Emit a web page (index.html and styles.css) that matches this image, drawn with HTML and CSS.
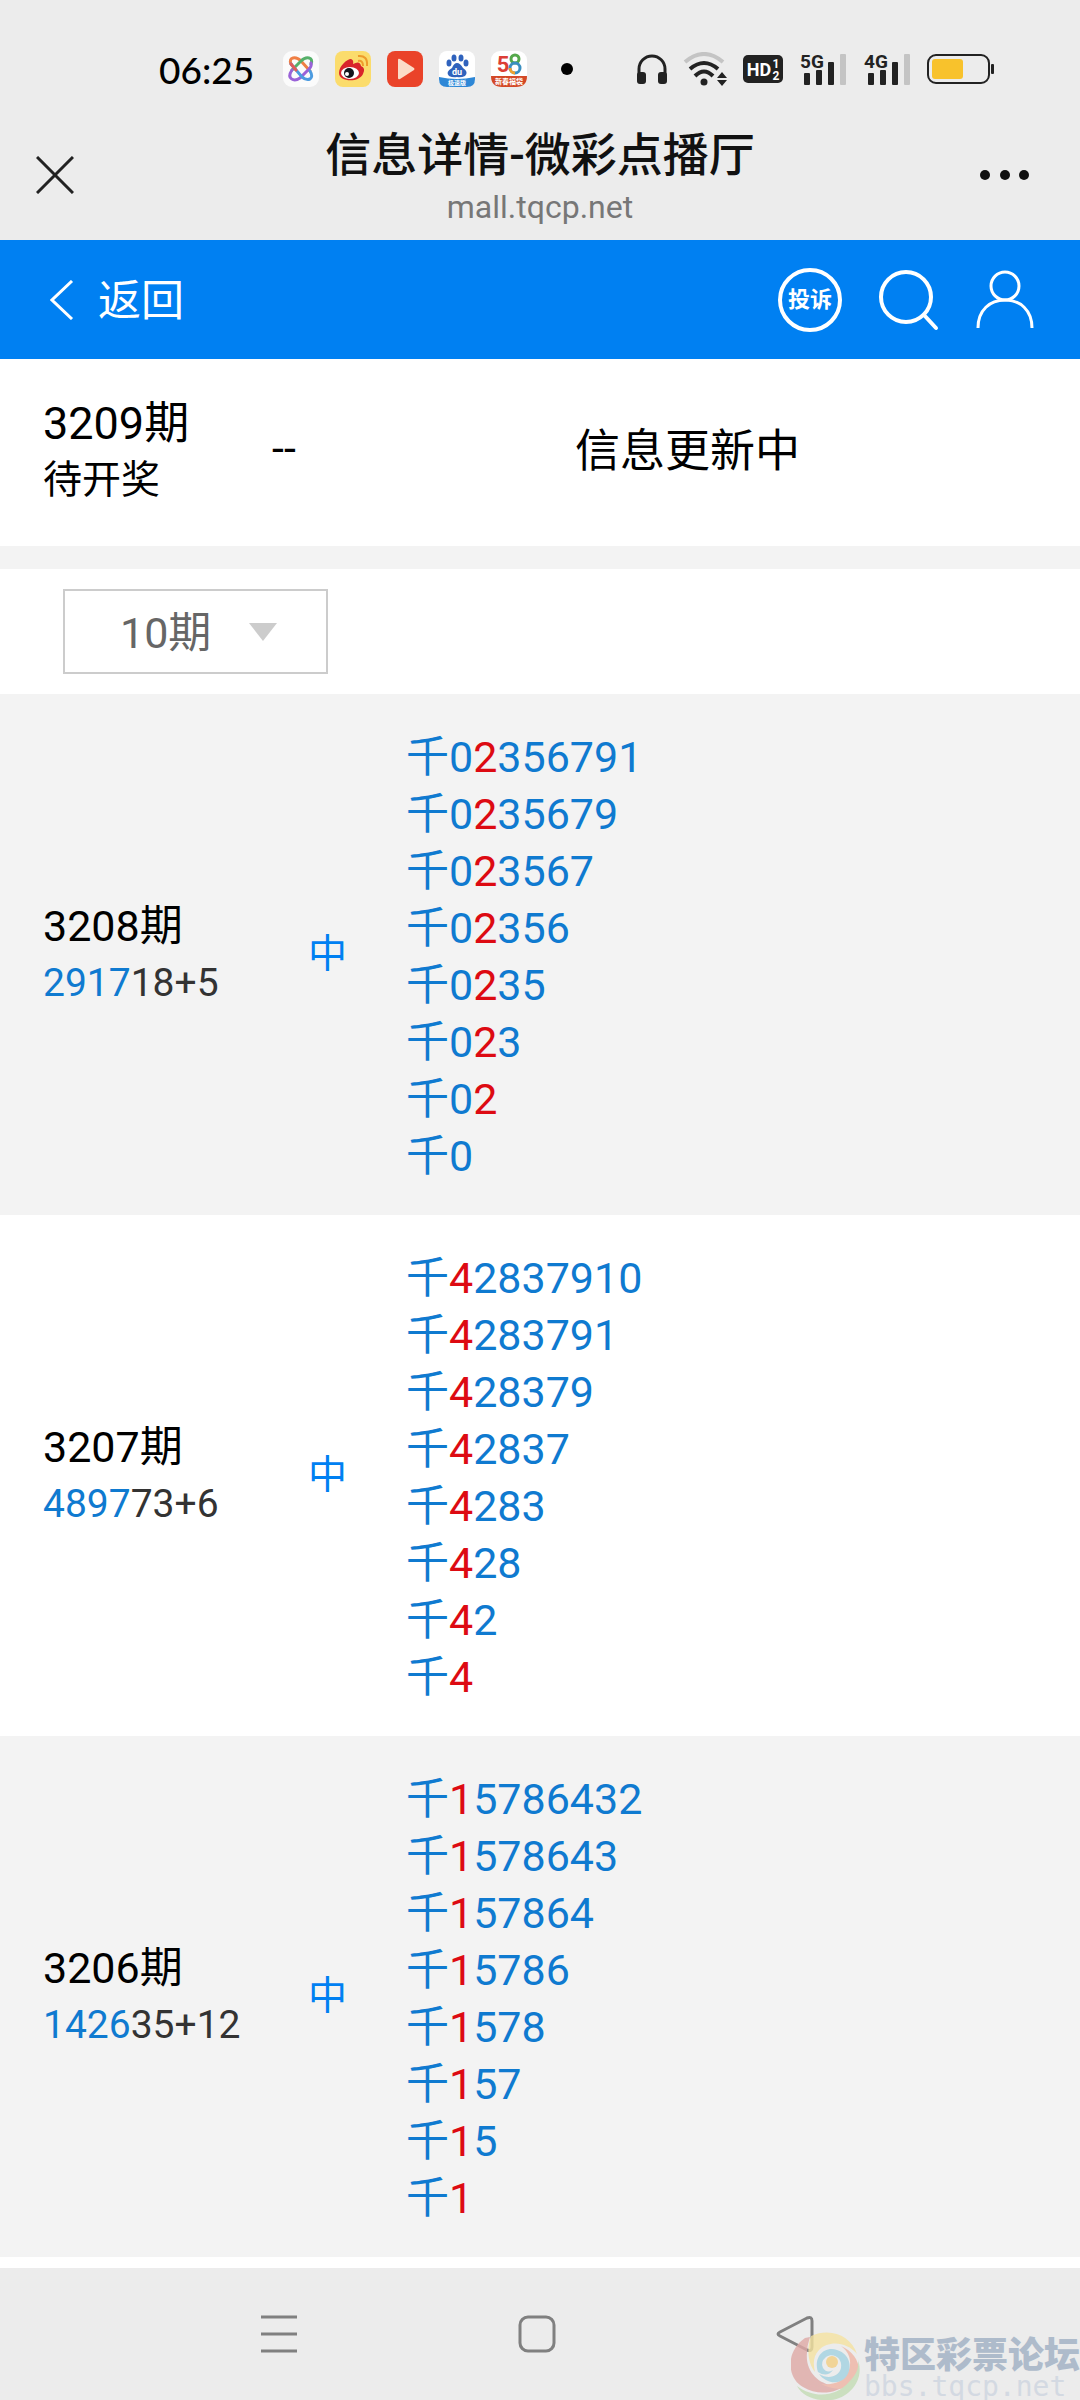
FILE: index.html
```
<!DOCTYPE html>
<html lang="zh-CN">
<head>
  <meta charset="UTF-8">
  <meta name="viewport" content="width=device-width, initial-scale=1.0">
  <title>信息详情-微彩点播厅</title>
  <link rel="stylesheet" href="styles.css">
</head>
<body>

<!-- Status bar -->
<div class="status-bar">
  <span class="clock">06:25</span>
  <div class="app-icons">
    <svg width="36" height="36" viewBox="0 0 36 36">
      <rect width="36" height="36" rx="9" fill="#fbfbfb"/>
      <g fill="none" stroke-width="3" stroke-linecap="round">
        <path d="M8 13 C5 6 13 5 18 10 L27 20" stroke="#ef7f45"/>
        <path d="M28 13 C31 6 23 5 18 10 L9 19" stroke="#56b06a"/>
        <path d="M9 19 C3 28 11 31 17 27 L26 18 Q29 15 28 12" stroke="#9a62d8"/>
        <path d="M8 13 L19 26 C25 31 32 28 27 20" stroke="#4c9be0"/>
        <path d="M8 13 L13 19" stroke="#e25a5a"/>
      </g>
    </svg>
    <svg width="36" height="36" viewBox="0 0 36 36">
      <rect width="36" height="36" rx="8" fill="#fbdc6c"/>
      <path d="M4 22 C4 15 12 8 16 8 Q19 9 18 13 Q25 9 26 15 Q31 17 28 23 C24 32 4 31 4 22Z" fill="#d9242b"/>
      <ellipse cx="15" cy="22" rx="9" ry="6" fill="#fff"/>
      <circle cx="14" cy="22" r="5" fill="#14161c"/>
      <circle cx="12" cy="23" r="2" fill="#fff"/>
      <path d="M23 10 Q28 9 28 15 M23 5 Q33 4 32 15" fill="none" stroke="#ee9b2b" stroke-width="2"/>
    </svg>
    <svg width="36" height="36" viewBox="0 0 36 36">
      <rect width="36" height="36" rx="8" fill="#ea4329"/>
      <path d="M11 9 V27 Q11 29 13 28 L27 19 Q28 18 27 17 L13 8 Q11 7 11 9Z" fill="#fbdcc8"/>
    </svg>
    <svg width="36" height="36" viewBox="0 0 36 36">
      <rect width="36" height="36" rx="8" fill="#fff"/>
      <path d="M0 26 Q18 30 36 26 V28 Q36 36 28 36 H8 Q0 36 0 28Z" fill="#2e87d6"/>
      <g fill="#2f62bd">
        <ellipse cx="10" cy="12" rx="2.5" ry="3.5"/>
        <ellipse cx="15" cy="7" rx="2.5" ry="3.5"/>
        <ellipse cx="22" cy="7" rx="2.5" ry="3.5"/>
        <ellipse cx="27" cy="12" rx="2.5" ry="3.5"/>
        <path d="M18 12 Q21 12 24 17 Q30 21 26 25 Q22 27 18 26 Q14 27 10 25 Q6 21 13 17 Q15 12 18 12Z"/>
      </g>
      <text x="18" y="24" class="icon-text" font-size="9" fill="#fff">du</text>
      <text x="18" y="34" class="icon-text" font-size="6" fill="#fff">极速版</text>
    </svg>
    <svg width="36" height="36" viewBox="0 0 36 36">
      <rect width="36" height="36" rx="9" fill="#fff"/>
      <path d="M0 25 H36 Q36 36 25 36 H11 Q0 36 0 25Z" fill="#d34826"/>
      <text x="12" y="21" class="icon-text" font-size="22" fill="#dc3e35">5</text>
      <circle cx="24" cy="8" r="4" fill="none" stroke="#54a84b" stroke-width="3"/>
      <circle cx="24" cy="17" r="5" fill="none" stroke="#3a8fc0" stroke-width="3"/>
      <path d="M19 17 A5 5 0 0 0 24 22" fill="none" stroke="#efa12e" stroke-width="3"/>
      <text x="18" y="33" class="icon-text" font-size="7" fill="#fff">新春福袋</text>
    </svg>
  </div>
  <span class="dot"></span>
  <div class="system-icons">
    <svg width="30" height="30" viewBox="0 0 30 30">
      <path d="M2 27 V15 A13 13 0 0 1 28 15 V27" fill="none" stroke="#222" stroke-width="3"/>
      <rect x="0" y="18" width="9" height="12" rx="3" fill="#222"/>
      <rect x="21" y="18" width="9" height="12" rx="3" fill="#222"/>
    </svg>
    <svg width="44" height="34" viewBox="0 0 44 34">
      <g fill="none" stroke-width="4">
        <path d="M2 10 Q21 -6 40 10" stroke="#c4c4c4"/>
        <path d="M7 17 Q21 5 35 17" stroke="#222"/>
        <path d="M12 24 Q21 15 30 24" stroke="#222"/>
      </g>
      <circle cx="21" cy="30" r="3.5" fill="#222"/>
      <path d="M34 26 L39 20 L44 26Z M34 28 L39 34 L44 28Z" fill="#222"/>
    </svg>
    <svg width="40" height="28" viewBox="0 0 40 28">
      <rect width="40" height="28" rx="5" fill="#222"/>
      <text x="16" y="21" class="icon-text" font-size="18" fill="#fff">HD</text>
      <text x="33" y="13" class="icon-text" font-size="12" fill="#fff">1</text>
      <text x="33" y="25" class="icon-text" font-size="12" fill="#fff">2</text>
    </svg>
    <svg width="48" height="36" viewBox="0 0 48 36">
      <text x="13" y="17" class="icon-text" font-size="19" fill="#222">5G</text>
      <g fill="#222">
        <rect x="5" y="22" width="6" height="12" rx="1"/>
        <rect x="17" y="19" width="6" height="15" rx="1"/>
        <rect x="29" y="11" width="6" height="23" rx="1"/>
      </g>
      <rect x="41" y="3" width="6" height="31" rx="1" fill="#c4c4c4"/>
    </svg>
    <svg width="48" height="36" viewBox="0 0 48 36">
      <text x="13" y="17" class="icon-text" font-size="19" fill="#222">4G</text>
      <g fill="#222">
        <rect x="5" y="22" width="6" height="12" rx="1"/>
        <rect x="17" y="19" width="6" height="15" rx="1"/>
        <rect x="29" y="11" width="6" height="23" rx="1"/>
      </g>
      <rect x="41" y="3" width="6" height="31" rx="1" fill="#c4c4c4"/>
    </svg>
    <svg width="68" height="30" viewBox="0 0 68 30">
      <rect x="1" y="1" width="61" height="28" rx="8" fill="none" stroke="#222" stroke-width="2"/>
      <rect x="5" y="5" width="31" height="20" rx="3" fill="#f8c22c"/>
      <rect x="64" y="10" width="3" height="10" rx="1" fill="#222"/>
    </svg>
  </div>
</div>

<!-- Browser title -->
<header class="title-bar">
  <button type="button" class="icon-button" aria-label="关闭">
    <svg width="38" height="38" viewBox="0 0 38 38"><path d="M1 1 L37 37 M37 1 L1 37" stroke="#222" stroke-width="3"/></svg>
  </button>
  <div class="title">
    <h1>信息详情-微彩点播厅</h1>
    <p>mall.tqcp.net</p>
  </div>
  <button type="button" class="icon-button more" aria-label="更多">
    <svg width="50" height="12" viewBox="0 0 50 12" fill="#111"><circle cx="5" cy="6" r="5"/><circle cx="25" cy="6" r="5"/><circle cx="44" cy="6" r="5"/></svg>
  </button>
</header>

<!-- Site navigation -->
<nav class="site-nav">
  <a href="#" class="back">
    <svg width="24" height="40" viewBox="0 0 24 40"><path d="M22 1 L2 20 L22 39" fill="none" stroke="#fff" stroke-width="3"/></svg>
    <span>返回</span>
  </a>
  <div class="nav-links">
    <a href="#" class="complaint">投诉</a>
    <a href="#" aria-label="搜索">
      <svg width="62" height="64" viewBox="0 0 62 64" fill="none" stroke="#fff" stroke-width="4" stroke-linecap="round">
        <circle cx="28" cy="29" r="25"/><path d="M46 47 L58 60"/>
      </svg>
    </a>
    <a href="#" aria-label="我的">
      <svg width="58" height="60" viewBox="0 0 58 60" fill="none" stroke="#fff" stroke-width="3">
        <circle cx="29" cy="16" r="14"/><path d="M2 58 C2 40 14 30 29 30 S56 40 56 58"/>
      </svg>
    </a>
  </div>
</nav>

<main>
  <section class="current">
    <div class="current-issue">
      <h2>3209期</h2>
      <p>待开奖</p>
    </div>
    <span class="current-result">--</span>
    <span class="current-info">信息更新中</span>
  </section>

  <div class="filter">
    <div class="select-box">
      <select id="issueCount" aria-label="期数">
        <option>10期</option>
      </select>
    </div>
  </div>

  <table class="history">
    <tbody>
      <tr>
        <td class="issue">3208期<p><b>2917</b>18+5</p></td>
        <td class="result">中</td>
        <td class="numbers">
          千0<em>2</em>356791<br>
          千0<em>2</em>35679<br>
          千0<em>2</em>3567<br>
          千0<em>2</em>356<br>
          千0<em>2</em>35<br>
          千0<em>2</em>3<br>
          千0<em>2</em><br>
          千0
        </td>
      </tr>
      <tr>
        <td class="issue">3207期<p><b>4897</b>73+6</p></td>
        <td class="result">中</td>
        <td class="numbers">
          千<em>4</em>2837910<br>
          千<em>4</em>283791<br>
          千<em>4</em>28379<br>
          千<em>4</em>2837<br>
          千<em>4</em>283<br>
          千<em>4</em>28<br>
          千<em>4</em>2<br>
          千<em>4</em>
        </td>
      </tr>
      <tr>
        <td class="issue">3206期<p><b>1426</b>35+12</p></td>
        <td class="result">中</td>
        <td class="numbers">
          千<em>1</em>5786432<br>
          千<em>1</em>578643<br>
          千<em>1</em>57864<br>
          千<em>1</em>5786<br>
          千<em>1</em>578<br>
          千<em>1</em>57<br>
          千<em>1</em>5<br>
          千<em>1</em>
        </td>
      </tr>
    </tbody>
  </table>
</main>

<!-- Phone navigation keys -->
<footer class="phone-nav">
  <button type="button" class="icon-button" aria-label="任务">
    <svg width="38" height="38" viewBox="0 0 38 38" stroke="#808080" stroke-width="3"><path d="M1 2 H37 M1 19 H37 M1 36 H37"/></svg>
  </button>
  <button type="button" class="icon-button" aria-label="主页">
    <svg width="38" height="38" viewBox="0 0 38 38"><rect x="2" y="2" width="34" height="34" rx="8" fill="none" stroke="#808080" stroke-width="3"/></svg>
  </button>
  <button type="button" class="icon-button" aria-label="后退">
    <svg width="38" height="38" viewBox="0 0 38 38"><path d="M4 17 L31 3 Q36 1 36 6 V32 Q36 37 31 35 L4 21 Q0 19 4 17Z" fill="none" stroke="#808080" stroke-width="3"/></svg>
  </button>
</footer>

<div class="watermark">
  <svg width="70" height="68" viewBox="0 0 70 68">
    <path d="M14 6 C-6 20 -4 46 12 55 C28 65 48 60 56 52 C36 58 18 46 16 28 Q15 16 19 5Z" fill="#dfa9a6"/>
    <path d="M20 4 C40 -5 60 4 66 22 C56 10 38 8 28 18 C22 24 22 32 24 40 C16 30 16 14 20 4Z" fill="#f5e3a0"/>
    <path d="M50 14 C64 20 72 34 66 48 C60 60 42 58 30 52 C44 54 54 48 58 38 C61 28 58 20 50 14Z" fill="#efb5a4"/>
    <path d="M27 40 C22 24 34 14 46 18 C60 22 62 38 54 46 C46 54 34 50 28 42 C38 48 48 44 50 36 C52 26 42 20 35 25 Q29 30 32 36 Q36 42 42 38 Q36 46 27 40Z" fill="#a3d2e1"/>
    <path d="M58 50 C66 42 68 36 67 28 C74 48 58 66 40 68 H30 C20 67 10 62 6 54 C22 66 44 66 58 50Z" fill="#c3dcb5"/>
    <circle cx="41" cy="30" r="6" fill="#f3cf83"/>
  </svg>
  <div>
    <strong>特区彩票论坛</strong>
    <span>bbs.tqcp.net</span>
  </div>
</div>

</body>
</html>
```
FILE: styles.css
```
* {
  box-sizing: border-box;
}

body {
  position: relative;
  display: flex;
  flex-direction: column;
  min-height: 100vh;
  margin: 0;
  background-color: #fff;
  color: #000;
  font-family: Roboto, "Noto Sans CJK SC", sans-serif;
  font-size: 43px;
  line-height: 57px;
}

h1, h2, p {
  margin: 0;
  font-weight: normal;
}

a {
  color: #fff;
  text-decoration: none;
}

svg {
  display: block;
  flex: none;
}

.icon-button {
  padding: 0;
  border: none;
  background: none;
  cursor: pointer;
}

.icon-text {
  font-family: Roboto, "Noto Sans CJK SC", sans-serif;
  font-weight: bold;
  text-anchor: middle;
}

/* Status bar */
.status-bar {
  display: flex;
  align-items: center;
  height: 100px;
  padding: 38px 85px 0 159px;
  background-color: #ececec;
}

.clock {
  font-family: Lato, sans-serif;
  font-size: 37px;
  font-weight: 500;
}

.app-icons, .system-icons {
  display: flex;
  align-items: center;
  gap: 16px;
}

.app-icons {
  margin-left: 29px;
}

.system-icons {
  margin-left: auto;
}

.dot {
  width: 12px;
  height: 12px;
  margin-left: 34px;
  border-radius: 50%;
  background-color: #000;
}

/* Title bar */
.title-bar {
  display: grid;
  grid-template-columns: 1fr auto 1fr;
  align-items: center;
  justify-items: start;
  height: 140px;
  padding: 10px 36px 0;
  background-color: #ececec;
}

.title {
  padding-top: 4px;
  text-align: center;
}

.title h1 {
  color: #111;
  font-size: 46px;
  font-weight: 500;
  line-height: 60px;
}

.title p {
  color: #777;
  font-size: 32px;
  line-height: 44px;
}

.more {
  justify-self: end;
  padding-right: 14px;
}

/* Site navigation */
.site-nav {
  display: flex;
  align-items: center;
  justify-content: space-between;
  height: 119px;
  padding: 0 46px 0 50px;
  background-color: #0080f2;
}

.back, .nav-links {
  display: flex;
  align-items: center;
}

.back {
  gap: 24px;
}

.back span {
  padding-top: 4px;
}

.nav-links {
  gap: 36px;
}

.complaint {
  width: 64px;
  height: 64px;
  border: 4px solid #fff;
  border-radius: 50%;
  font-size: 22px;
  font-weight: bold;
  line-height: 56px;
  text-align: center;
}

/* Current issue */
.current {
  display: flex;
  align-items: center;
  height: 187px;
  padding: 0 0 2px 43px;
}

.current-issue {
  width: 229px;
}

.current-issue h2, .current-info {
  font-size: 45px;
}

.current-issue p {
  font-size: 39px;
}

.current-result {
  width: 97px;
  padding-bottom: 6px;
}

.current-info {
  flex: 1;
  padding-right: 74px;
  text-align: center;
}

/* Filter */
.filter {
  padding: 20px 63px;
  border-top: 23px solid #f3f3f3;
}

.select-box {
  position: relative;
  width: 265px;
}

.select-box::after {
  content: "";
  position: absolute;
  top: 34px;
  right: 51px;
  border: 14px solid transparent;
  border-top: 18px solid #ccc;
  border-bottom: none;
  pointer-events: none;
}

.select-box select {
  display: block;
  width: 100%;
  height: 85px;
  padding: 4px 55px 0;
  border: 2px solid #ccc;
  border-radius: 0;
  background-color: #fff;
  color: #666;
  font: inherit;
  appearance: none;
}

/* History */
.history {
  width: 100%;
  border-collapse: collapse;
  table-layout: fixed;
}

.history tr:nth-child(odd) {
  background-color: #f3f3f3;
}

.history td {
  padding: 35px 0 30px;
}

.history .issue {
  width: 308px;
  padding: 0 0 0 43px;
}

.issue p {
  color: #333;
  font-size: 39px;
}

.issue b {
  color: #0f7ad0;
  font-weight: normal;
}

.history .result {
  width: 98px;
  padding: 0;
  color: #0080f2;
  font-size: 39px;
}

.numbers {
  color: #0f7ad0;
}

.numbers em {
  color: #dd0a12;
  font-style: normal;
}

/* Phone keys */
.phone-nav {
  display: flex;
  justify-content: space-between;
  height: 132px;
  margin-top: auto;
  padding: 0 266px 0 260px;
  background-color: #ececec;
}

/* Watermark */
.watermark {
  position: absolute;
  right: 0;
  bottom: 0;
  display: flex;
  align-items: flex-end;
  gap: 3px;
  opacity: 0.8;
}

.watermark strong {
  display: block;
  color: #9fafc3;
  font-size: 36px;
  font-weight: 900;
  line-height: 36px;
}

.watermark span {
  display: block;
  color: #ced5e0;
  font-family: "DejaVu Sans Mono", monospace;
  font-size: 28px;
  line-height: 26px;
}
```
